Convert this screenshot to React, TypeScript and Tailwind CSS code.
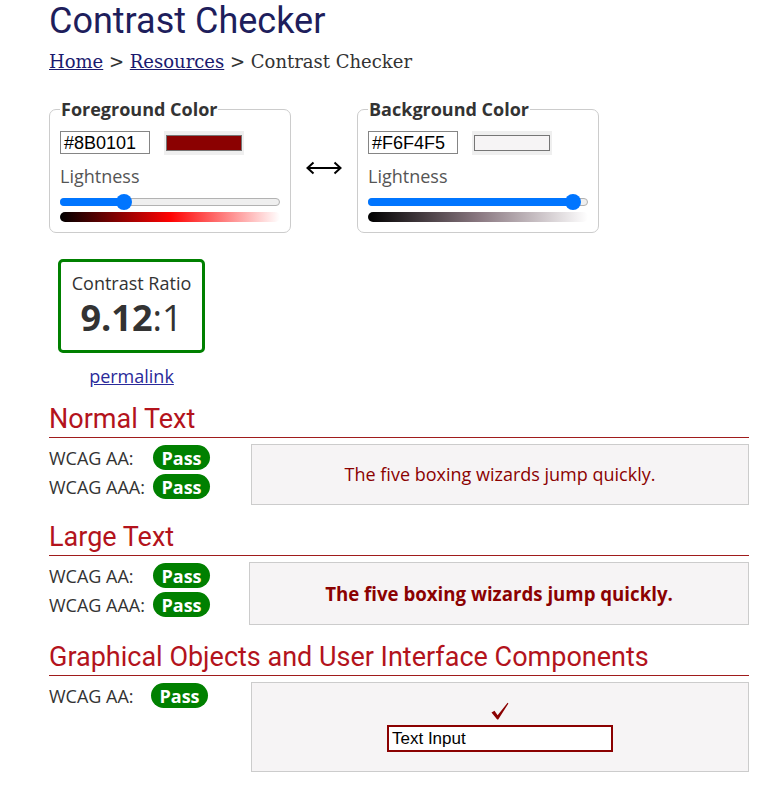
import React from "react";

function Swatch({ color }: { color: string }) {
  return (
    <div className="w-[80px] h-[24px] bg-[#efefef] px-[2px] py-[4px] ml-[14px]">
      <div className="w-full h-full border border-[#767676]" style={{ background: color }} />
    </div>
  );
}

function Slider({ thumbLeft }: { thumbLeft: number }) {
  return (
    <div className="relative h-[16px] w-full mt-[6px]">
      <div className="absolute left-0 right-0 top-[4px] h-[8px] rounded-full border border-[#b2b2b2] bg-[#efefef]" />
      <div
        className="absolute left-0 top-[4px] h-[8px] rounded-l-full bg-[#0075ff]"
        style={{ width: thumbLeft + 8 }}
      />
      <div
        className="absolute top-0 w-[16px] h-[16px] rounded-full bg-[#0075ff]"
        style={{ left: thumbLeft }}
      />
    </div>
  );
}

function ColorFieldset({
  title,
  hex,
  color,
  thumbLeft,
  gradient,
}: {
  title: string;
  hex: string;
  color: string;
  thumbLeft: number;
  gradient: string;
}) {
  return (
    <fieldset className="w-[242px] border border-[#cccccc] rounded-[7px] px-[10px] pb-[10px]">
      <legend className="px-[1px] font-bold text-[18px] leading-[24px] text-[#333333]">{title}</legend>
      <div className="flex items-start mt-[10px]">
        <div className="w-[90px] h-[23px] border border-[#858585] pl-[3px] flex items-center font-['Liberation_Sans',Arial,sans-serif] text-[18px] text-black leading-none">
          {hex}
        </div>
        <Swatch color={color} />
      </div>
      <div className="mt-[9px] text-[18px] leading-[24px] text-[#555555]">Lightness</div>
      <Slider thumbLeft={thumbLeft} />
      <div className={`mt-[2px] h-[10px] rounded-[5px] ${gradient}`} />
    </fieldset>
  );
}

function Pill() {
  return (
    <span className="inline-flex items-center justify-center w-[57px] h-[25px] rounded-full bg-[#008000] text-white font-bold text-[18px] leading-none">
      Pass
    </span>
  );
}

function Row({ label, labelW }: { label: string; labelW: string }) {
  return (
    <div className="flex items-center h-[25px]">
      <span className={`${labelW} text-[18px] text-[#333333] leading-[24px]`}>{label}</span>
      <Pill />
    </div>
  );
}

function SectionHeading({ children, mt }: { children: React.ReactNode; mt: string }) {
  return (
    <h2
      className={`${mt} font-['Roboto',sans-serif] text-[27px] leading-[31px] text-[#b3131c] pb-[2px] border-b border-[#a01c1c]`}
    >
      {children}
    </h2>
  );
}

export default function App() {
  return (
    <div className="bg-white min-h-[793px] pl-[49px] pr-[20px] font-['Open_Sans',sans-serif] text-[#333333]">
      <h1 className="font-['Roboto',sans-serif] text-[36px] leading-[42px] text-[#1e1e5c]">Contrast Checker</h1>
      <div className="mt-[8px] font-['DejaVu_Serif',serif] text-[18px] leading-[24px] text-[#333333]">
        <a className="underline text-[#1a1a6e]">Home</a> &gt;{" "}
        <a className="underline text-[#1a1a6e]">Resources</a> &gt; Contrast Checker
      </div>

      <div className="mt-[23px] flex items-center">
        <ColorFieldset
          title="Foreground Color"
          hex="#8B0101"
          color="#8b0101"
          thumbLeft={56}
          gradient="bg-[linear-gradient(to_right,#000000,#fe0202,#ffffff)]"
        />
        <div className="mx-[15px] w-[36px] flex items-center justify-center pt-[5px]">
          <svg width="36" height="14" viewBox="0 0 36 14" fill="none" stroke="#000" strokeWidth="2">
            <line x1="1.5" y1="7" x2="34.5" y2="7" />
            <polyline points="7.5,1.5 1.5,7 7.5,12.5" />
            <polyline points="28.5,1.5 34.5,7 28.5,12.5" />
          </svg>
        </div>
        <ColorFieldset
          title="Background Color"
          hex="#F6F4F5"
          color="#f6f4f5"
          thumbLeft={197}
          gradient="bg-[linear-gradient(to_right,#000000,#897780,#ffffff)]"
        />
      </div>

      <div className="ml-[9px] w-[147px]">
        <div className="mt-[26px] w-[147px] h-[94px] border-[3px] border-[#008000] rounded-[5px] flex flex-col items-center justify-center">
          <div className="text-[18px] leading-[23px] text-[#333333] -mt-[1px]">Contrast Ratio</div>
          <div className="text-[36px] leading-[42px] text-[#333333] mt-[2px]">
            <span className="font-bold">9.12</span>:1
          </div>
        </div>
        <div className="mt-[11px] text-center text-[18px] leading-[24px]">
          <a className="underline text-[#2a2a9a]">permalink</a>
        </div>
      </div>

      <SectionHeading mt="mt-[16px]">Normal Text</SectionHeading>
      <div className="mt-[6px] flex items-start">
        <div className="w-[202px] pt-[1px] flex flex-col gap-[4px]">
          <Row label="WCAG AA:" labelW="w-[104px]" />
          <Row label="WCAG AAA:" labelW="w-[104px]" />
        </div>
        <div className="flex-1 h-[61px] border border-[#cccccc] bg-[#f6f4f5] flex items-center justify-center text-[18px] text-[#8b0101]">
          The five boxing wizards jump quickly.
        </div>
      </div>

      <SectionHeading mt="mt-[17px]">Large Text</SectionHeading>
      <div className="mt-[6px] flex items-start">
        <div className="w-[200px] pt-[1px] flex flex-col gap-[4px]">
          <Row label="WCAG AA:" labelW="w-[104px]" />
          <Row label="WCAG AAA:" labelW="w-[104px]" />
        </div>
        <div className="flex-1 h-[63px] border border-[#cccccc] bg-[#f6f4f5] flex items-center justify-center text-[18.66px] font-bold text-[#8b0101]">
          The five boxing wizards jump quickly.
        </div>
      </div>

      <SectionHeading mt="mt-[17px]">Graphical Objects and User Interface Components</SectionHeading>
      <div className="mt-[6px] flex items-start">
        <div className="w-[202px] pt-[1px] flex flex-col gap-[4px]">
          <Row label="WCAG AA:" labelW="w-[102px]" />
        </div>
        <div className="flex-1 h-[90px] border border-[#cccccc] bg-[#f6f4f5] flex flex-col items-center justify-center gap-[5px]">
          <svg width="18" height="18" viewBox="0 0 18 18">
            <path d="M0.5 10.5 L3.5 8.8 L6.6 13.2 L16.6 0.8 L17.4 1.4 L7.2 17.6 L6.2 17.6 Z" fill="#8b0101" />
          </svg>
          <div className="w-[226px] h-[27px] border-2 border-[#8b0101] bg-white pl-[3px] flex items-center font-['Liberation_Sans',Arial,sans-serif] text-[17px] text-black leading-none">
            Text Input
          </div>
        </div>
      </div>
    </div>
  );
}
